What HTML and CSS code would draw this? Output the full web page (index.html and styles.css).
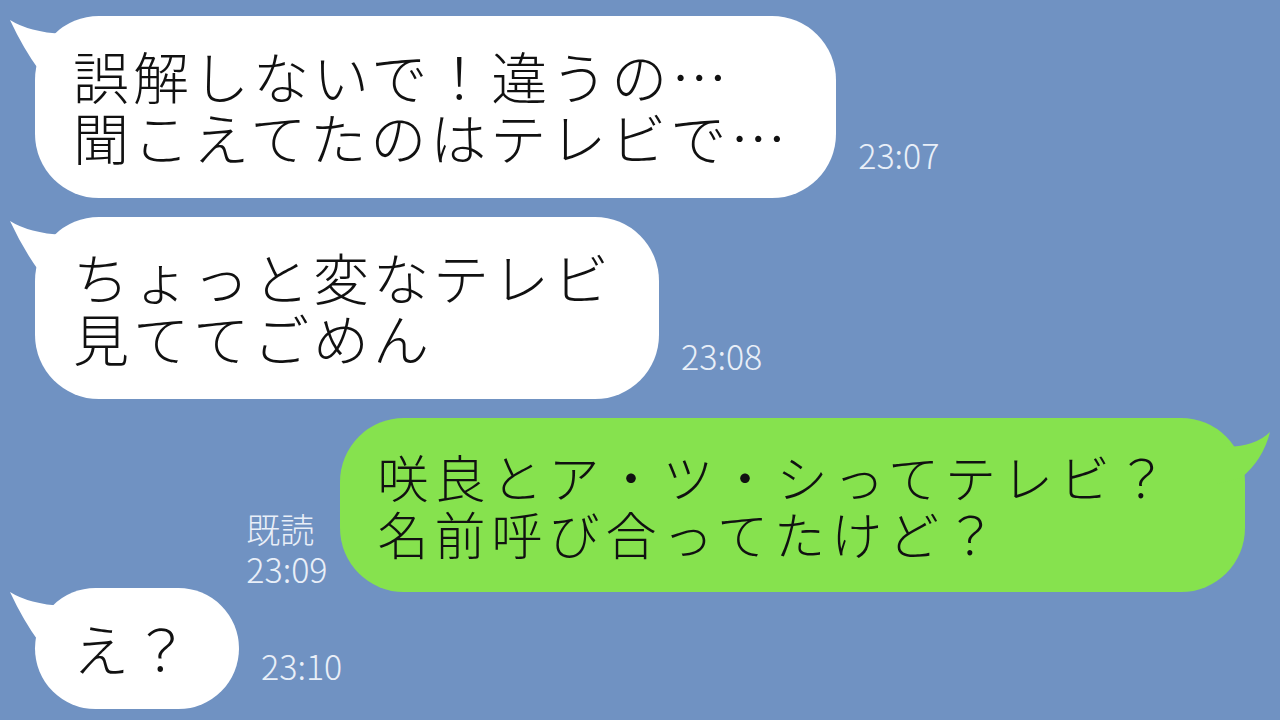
FILE: index.html
```html
<!DOCTYPE html>
<html lang="ja">
<head>
  <meta charset="UTF-8">
  <title>トーク</title>
  <link rel="stylesheet" href="styles.css">
</head>
<body>
  <div class="chat">
    <div class="row in first">
      <div class="bubble white">
        <svg class="tail tail-left" viewBox="0 0 60 60" width="60" height="60"><path d="M1,2 Q20,14 54,16 L54,54 L30,52 Q14,30 1,2 Z"/></svg>
        <p>誤解しないで！違うの…<br>聞こえてたのはテレビで…</p>
      </div>
      <span class="time">23:07</span>
    </div>

    <div class="row in second">
      <div class="bubble white">
        <svg class="tail tail-left" viewBox="0 0 60 60" width="60" height="60"><path d="M1,2 Q20,14 54,16 L54,54 L30,52 Q14,30 1,2 Z"/></svg>
        <p>ちょっと変なテレビ<br>見ててごめん</p>
      </div>
      <span class="time">23:08</span>
    </div>

    <div class="row out third">
      <div class="meta">
        <span>既読</span>
        <span>23:09</span>
      </div>
      <div class="bubble green">
        <svg class="tail tail-right" viewBox="0 0 60 60" width="60" height="60"><path d="M59,4 Q45,18 16,19 L6,19 L6,56 L30,50 Q52,32 59,4 Z"/></svg>
        <p>咲良とア・ツ・シってテレビ？<br>名前呼び合ってたけど？</p>
      </div>
    </div>

    <div class="row in fourth">
      <div class="bubble white">
        <svg class="tail tail-left" viewBox="0 0 60 60" width="60" height="60"><path d="M1,2 Q20,14 54,16 L54,54 L30,52 Q14,30 1,2 Z"/></svg>
        <p>え？</p>
      </div>
      <span class="time">23:10</span>
    </div>
  </div>
</body>
</html>
```

FILE: styles.css
```css
body {
  margin: 0;
  width: 1280px;
  height: 720px;
  overflow: hidden;
  background: #7092c2;
  font-family: "Noto Sans CJK JP", "Noto Sans", sans-serif;
}

.chat {
  display: flex;
  flex-direction: column;
  padding-top: 16px;
}

.row {
  display: flex;
  align-items: flex-end;
}

.row.in {
  padding-left: 35px;
}

.row.out {
  justify-content: flex-end;
  padding-right: 35px;
}

.second {
  margin-top: 19px;
}

.third {
  margin-top: 19px;
}

.fourth {
  margin-top: -4px;
}

.bubble {
  position: relative;
  border-radius: 64px;
}

.bubble p {
  margin: 0;
  color: #111;
  font-weight: 300;
  white-space: nowrap;
}

.white {
  background: #fff;
  padding: 28px 46px 32px 38px;
}

.white p {
  font-size: 56px;
  letter-spacing: 4px;
  line-height: 61px;
}

.green {
  background: #86e24e;
  padding: 30px 72px 30px 38px;
}

.green p {
  font-size: 51px;
  letter-spacing: 6px;
  line-height: 57px;
}

.tail {
  position: absolute;
}

.tail-left {
  left: -26px;
  top: 2px;
  fill: #fff;
}

.tail-right {
  right: -26px;
  top: 10px;
  fill: #86e24e;
}

.time {
  margin-left: 22px;
  padding-bottom: 23px;
  font-size: 34px;
  font-weight: 300;
  line-height: 40px;
  color: #e9eff8;
}

.meta {
  display: flex;
  flex-direction: column;
  margin-right: 12px;
  padding-bottom: 3px;
  font-size: 34px;
  font-weight: 300;
  line-height: 40px;
  color: #e9eff8;
}
```
